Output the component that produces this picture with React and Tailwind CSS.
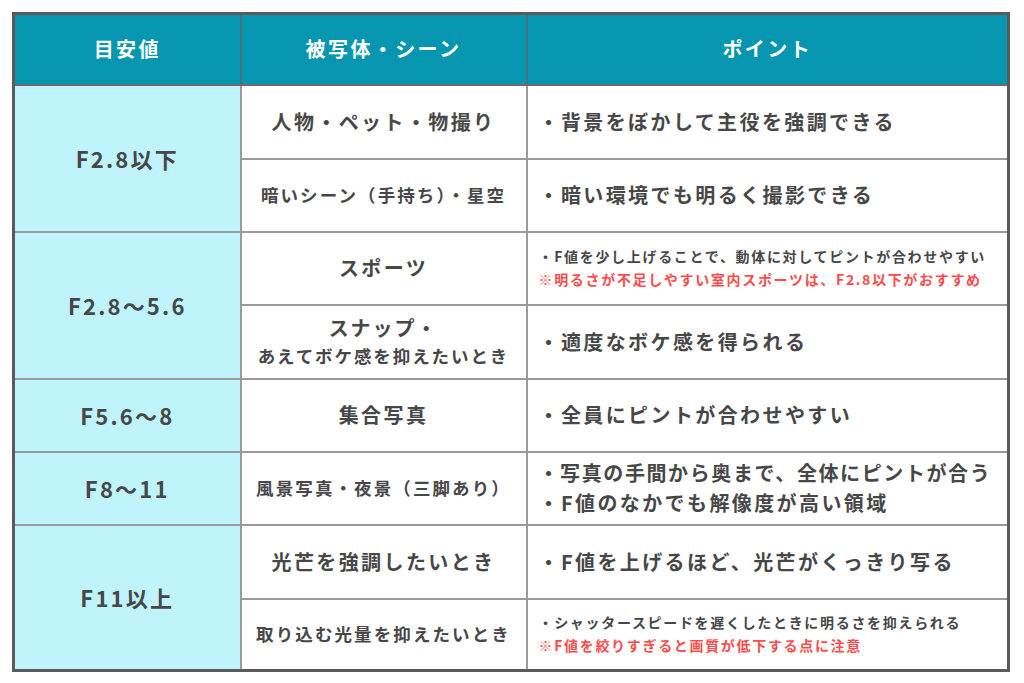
import React from "react";

const font = { fontFamily: '"Noto Sans CJK JP", "Noto Sans", sans-serif' };

function Bullet({ children, small, tight }) {
  const size = small
    ? "text-[14px] leading-[23px] tracking-[0.12em]"
    : tight
    ? "text-[20px] leading-[30px] tracking-[0.08em]"
    : "text-[20px] leading-[30px] tracking-[0.12em]";
  return <div className={`whitespace-nowrap ${size}`}>・{children}</div>;
}

function Note({ children }) {
  return <div className="whitespace-nowrap text-[14px] leading-[23px] tracking-[0.12em] text-[#ff4b4b]">※{children}</div>;
}

export default function App() {
  const td = "border-2 border-[#9a9a9a]";
  const f = `${td} bg-[#bff4fd] text-center text-[22px] tracking-[0.1em]`;
  const scene = `${td} text-center px-1 whitespace-nowrap`;
  const point = `${td} pl-[11px] pr-1 overflow-hidden`;

  return (
    <div className="w-[1024px] h-[683px] bg-white pt-[12px] pl-[12px]" style={font}>
      <table className="border-collapse border-[3px] border-[#5a5a5a] w-[998px] table-fixed font-bold text-[#474747]">
        <colgroup>
          <col className="w-[227px]" />
          <col className="w-[286px]" />
          <col />
        </colgroup>
        <thead>
          <tr className="h-[71px] bg-[#0796b0] text-white text-[20px] tracking-[0.12em]">
            <th className="border-2 border-[#4b6f78] border-b-[#6b6b6b]">目安値</th>
            <th className="border-2 border-[#4b6f78] border-b-[#6b6b6b]">被写体・シーン</th>
            <th className="border-2 border-[#4b6f78] border-b-[#6b6b6b]">ポイント</th>
          </tr>
        </thead>
        <tbody>
          <tr className="h-[74px]">
            <td rowSpan={2} className={f}>F2.8以下</td>
            <td className={`${scene} text-[20px] tracking-[0.12em]`}>人物・ペット・物撮り</td>
            <td className={point}><Bullet>背景をぼかして主役を強調できる</Bullet></td>
          </tr>
          <tr className="h-[73px]">
            <td className={`${scene} text-[17.5px] tracking-[0.12em]`}>暗いシーン（手持ち）・星空</td>
            <td className={point}><Bullet>暗い環境でも明るく撮影できる</Bullet></td>
          </tr>
          <tr className="h-[73px]">
            <td rowSpan={2} className={f}>F2.8〜5.6</td>
            <td className={`${scene} text-[20px] tracking-[0.12em]`}>スポーツ</td>
            <td className={`${point} pl-[10px]`}>
              <Bullet small>F値を少し上げることで、動体に対してピントが合わせやすい</Bullet>
              <Note>明るさが不足しやすい室内スポーツは、F2.8以下がおすすめ</Note>
            </td>
          </tr>
          <tr className="h-[74px]">
            <td className={`${scene} tracking-[0.12em]`}>
              <div className="text-[20px] leading-[28px]">スナップ・</div>
              <div className="text-[17.5px] leading-[28px]">あえてボケ感を抑えたいとき</div>
            </td>
            <td className={point}><Bullet>適度なボケ感を得られる</Bullet></td>
          </tr>
          <tr className="h-[73px]">
            <td className={f}>F5.6〜8</td>
            <td className={`${scene} text-[20px] tracking-[0.12em]`}>集合写真</td>
            <td className={point}><Bullet>全員にピントが合わせやすい</Bullet></td>
          </tr>
          <tr className="h-[73px]">
            <td className={f}>F8〜11</td>
            <td className={`${scene} text-[17.5px] tracking-[0.12em]`}>風景写真・夜景（三脚あり）</td>
            <td className={point}>
              <Bullet tight>写真の手間から奥まで、全体にピントが合う</Bullet>
              <Bullet>F値のなかでも解像度が高い領域</Bullet>
            </td>
          </tr>
          <tr className="h-[74px]">
            <td rowSpan={2} className={f}>F11以上</td>
            <td className={`${scene} text-[20px] tracking-[0.12em]`}>光芒を強調したいとき</td>
            <td className={point}><Bullet>F値を上げるほど、光芒がくっきり写る</Bullet></td>
          </tr>
          <tr className="h-[72px]">
            <td className={`${scene} text-[17.5px] tracking-[0.12em]`}>取り込む光量を抑えたいとき</td>
            <td className={`${point} pl-[10px]`}>
              <Bullet small>シャッタースピードを遅くしたときに明るさを抑えられる</Bullet>
              <Note>F値を絞りすぎると画質が低下する点に注意</Note>
            </td>
          </tr>
        </tbody>
      </table>
    </div>
  );
}
